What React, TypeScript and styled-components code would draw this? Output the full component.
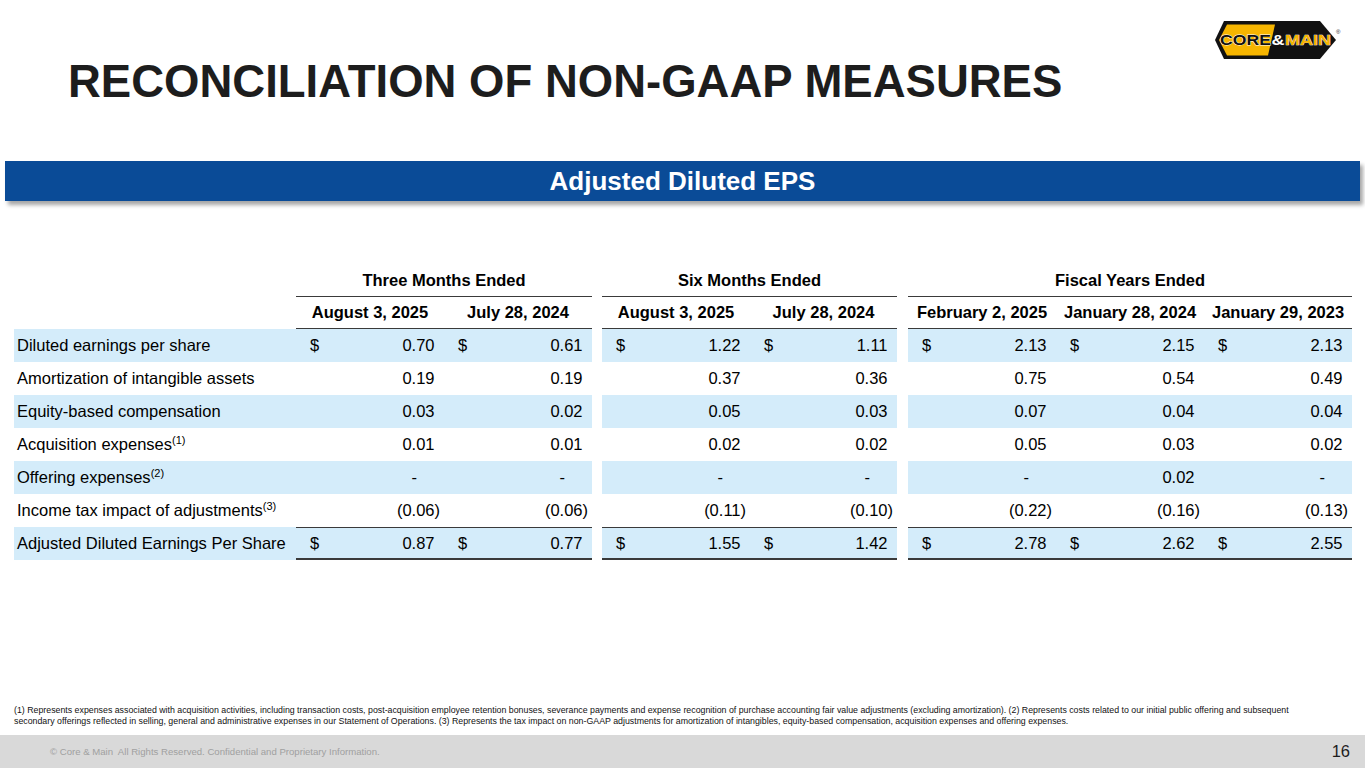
import React from 'react';
import styled, { createGlobalStyle } from 'styled-components';

type Row = {
  label: string;
  note?: string;
  values: string[];
  dollar?: boolean;
  total?: boolean;
};

const groups = [
  { title: 'Three Months Ended', cols: ['August 3, 2025', 'July 28, 2024'] },
  { title: 'Six Months Ended', cols: ['August 3, 2025', 'July 28, 2024'] },
  { title: 'Fiscal Years Ended', cols: ['February 2, 2025', 'January 28, 2024', 'January 29, 2023'] },
];

const rows: Row[] = [
  { label: 'Diluted earnings per share', values: ['0.70', '0.61', '1.22', '1.11', '2.13', '2.15', '2.13'], dollar: true },
  { label: 'Amortization of intangible assets', values: ['0.19', '0.19', '0.37', '0.36', '0.75', '0.54', '0.49'] },
  { label: 'Equity-based compensation', values: ['0.03', '0.02', '0.05', '0.03', '0.07', '0.04', '0.04'] },
  { label: 'Acquisition expenses', note: '1', values: ['0.01', '0.01', '0.02', '0.02', '0.05', '0.03', '0.02'] },
  { label: 'Offering expenses', note: '2', values: ['-', '-', '-', '-', '-', '0.02', '-'] },
  { label: 'Income tax impact of adjustments', note: '3', values: ['(0.06)', '(0.06)', '(0.11)', '(0.10)', '(0.22)', '(0.16)', '(0.13)'] },
  { label: 'Adjusted Diluted Earnings Per Share', values: ['0.87', '0.77', '1.55', '1.42', '2.78', '2.62', '2.55'], dollar: true, total: true },
];

const GlobalStyle = createGlobalStyle`
  * { box-sizing: border-box; }
  body {
    margin: 0;
    background: #fff;
    font-family: "Liberation Sans", Arial, sans-serif;
  }
`;

const Slide = styled.div`
  width: 1365px;
  height: 768px;
  display: flex;
  flex-direction: column;
  overflow: hidden;
  background: #fff;
`;

const Header = styled.header`
  height: 161px;
  display: flex;
  justify-content: space-between;
  align-items: flex-start;
  padding: 19px 22px 0 68px;
`;

const Title = styled.h1`
  margin: 40px 0 0;
  font-size: 45.5px;
  line-height: 45px;
  font-weight: 700;
  color: #1d1d1d;
  letter-spacing: 0;
`;

const Banner = styled.div`
  margin: 0 5px;
  height: 40px;
  display: flex;
  align-items: center;
  justify-content: center;
  background: #0a4b97;
  box-shadow: 3px 4px 4px rgba(0, 0, 0, 0.35);
`;

const BannerText = styled.h2`
  margin: 0;
  color: #fff;
  font-size: 26px;
  font-weight: 700;
`;

const Table = styled.table`
  margin: 64px 0 0 14px;
  width: 1338px;
  table-layout: fixed;
  border-collapse: separate;
  border-spacing: 0;
  font-size: 16.5px;
  color: #000;
`;

const HeadRow = styled.tr`
  height: 32px;
`;

const BodyRow = styled.tr`
  height: 33px;
`;

const GroupHead = styled.th`
  padding: 0;
  font-weight: 700;
  text-align: center;
  vertical-align: middle;
  border-bottom: 1px solid #3a3a3a;
`;

const DateHead = styled.th`
  padding: 0;
  font-weight: 700;
  text-align: center;
  vertical-align: middle;
  white-space: nowrap;
  border-bottom: 1px solid #3a3a3a;
`;

const Blank = styled.td`
  padding: 0;
`;

const LabelCell = styled.td<{ $shade: boolean }>`
  padding: 0 0 0 3px;
  white-space: nowrap;
  vertical-align: middle;
  background: ${({ $shade }) => ($shade ? '#d4ecfa' : 'transparent')};
`;

const NumCell = styled.td<{ $shade: boolean; $total?: boolean }>`
  padding: 0 4px 0 14px;
  vertical-align: middle;
  background: ${({ $shade }) => ($shade ? '#d4ecfa' : 'transparent')};
  border-top: ${({ $total }) => ($total ? '1px solid #3a3a3a' : '0')};
  border-bottom: ${({ $total }) => ($total ? '2px solid #3a3a3a' : '0')};
`;

const CellInner = styled.div`
  display: flex;
  justify-content: space-between;
  align-items: center;
  white-space: nowrap;
`;

const Paren = styled.span`
  visibility: hidden;
`;

const Dash = styled.span`
  margin-right: 23px;
`;

const Sup = styled.sup`
  font-size: 11px;
  vertical-align: 6px;
  line-height: 0;
`;

const Footnote = styled.p`
  margin: auto 0 0;
  padding: 0 14px;
  font-size: 8.8px;
  line-height: 11px;
  color: #111;
  white-space: nowrap;
`;

const Footer = styled.footer`
  margin-top: 8px;
  height: 33px;
  display: flex;
  align-items: center;
  justify-content: space-between;
  padding: 0 15px 0 50px;
  background: #d9d9d9;
`;

const Copyright = styled.span`
  font-size: 9.6px;
  color: #a0a0a0;
`;

const PageNum = styled.span`
  font-size: 16.5px;
  color: #1d1d1d;
`;

const Logo = () => (
  <svg width="132" height="44" viewBox="0 0 132 44" aria-label="Core & Main">
    <polygon points="4,21 13,2 109,2 125,21 109,40 13,40" fill="#111" />
    <polygon points="8,21 16,5.5 64,5.5 57,36.5 16,36.5" fill="#f6b500" />
    <g fontFamily="'Liberation Sans', Arial, sans-serif" fontWeight="900" fontSize="14.5">
      <text x="9" y="26" textLength="51" lengthAdjust="spacingAndGlyphs" fill="#111" stroke="#fff" strokeWidth="0.8" paintOrder="stroke">
        CORE
      </text>
      <text x="60.5" y="26" textLength="13" lengthAdjust="spacingAndGlyphs" fill="#fff">
        &amp;
      </text>
      <text x="74" y="26" textLength="46" lengthAdjust="spacingAndGlyphs" fill="#f6b500" stroke="#fff" strokeWidth="0.6" paintOrder="stroke">
        MAIN
      </text>
    </g>
    <text x="125" y="15" fontSize="6" fill="#222" fontFamily="'Liberation Sans', Arial, sans-serif">®</text>
  </svg>
);

const renderValue = (value: string, dollar?: boolean) => {
  const isParen = value.startsWith('(');
  const isDash = value === '-';
  return (
    <CellInner>
      <span>{dollar ? '$' : ''}</span>
      {isDash ? (
        <Dash>-</Dash>
      ) : (
        <span>
          {value}
          {!isParen && <Paren>)</Paren>}
        </span>
      )}
    </CellInner>
  );
};

const App: React.FC = () => {
  const widths = [282, 148, 148, 10, 148, 147, 11, 148, 148, 148];
  return (
    <>
      <GlobalStyle />
      <Slide>
        <Header>
          <Title>RECONCILIATION OF NON-GAAP MEASURES</Title>
          <Logo />
        </Header>
        <Banner>
          <BannerText>Adjusted Diluted EPS</BannerText>
        </Banner>
        <Table>
          <colgroup>
            {widths.map((w, i) => (
              <col key={i} style={{ width: w }} />
            ))}
          </colgroup>
          <thead>
            <HeadRow>
              <Blank />
              {groups.map((g, gi) => (
                <React.Fragment key={g.title}>
                  {gi > 0 && <Blank />}
                  <GroupHead colSpan={g.cols.length}>{g.title}</GroupHead>
                </React.Fragment>
              ))}
            </HeadRow>
            <HeadRow>
              <Blank />
              {groups.map((g, gi) => (
                <React.Fragment key={g.title}>
                  {gi > 0 && <Blank />}
                  {g.cols.map((c) => (
                    <DateHead key={c}>{c}</DateHead>
                  ))}
                </React.Fragment>
              ))}
            </HeadRow>
          </thead>
          <tbody>
            {rows.map((r, ri) => {
              const shade = ri % 2 === 0;
              let idx = 0;
              return (
                <BodyRow key={r.label}>
                  <LabelCell $shade={shade}>
                    {r.label}
                    {r.note && <Sup>({r.note})</Sup>}
                  </LabelCell>
                  {groups.map((g, gi) => (
                    <React.Fragment key={g.title}>
                      {gi > 0 && <Blank />}
                      {g.cols.map((c) => {
                        const v = r.values[idx++];
                        return (
                          <NumCell key={c} $shade={shade} $total={r.total}>
                            {renderValue(v, r.dollar)}
                          </NumCell>
                        );
                      })}
                    </React.Fragment>
                  ))}
                </BodyRow>
              );
            })}
          </tbody>
        </Table>
        <Footnote>
          (1) Represents expenses associated with acquisition activities, including transaction costs, post-acquisition employee retention bonuses, severance payments and expense recognition of purchase accounting fair value adjustments (excluding amortization). (2) Represents costs related to our initial public offering and subsequent
          <br />
          secondary offerings reflected in selling, general and administrative expenses in our Statement of Operations. (3) Represents the tax impact on non-GAAP adjustments for amortization of intangibles, equity-based compensation, acquisition expenses and offering expenses.
        </Footnote>
        <Footer>
          <Copyright>© Core &amp; Main&nbsp; All Rights Reserved. Confidential and Proprietary Information.</Copyright>
          <PageNum>16</PageNum>
        </Footer>
      </Slide>
    </>
  );
};

export default App;
